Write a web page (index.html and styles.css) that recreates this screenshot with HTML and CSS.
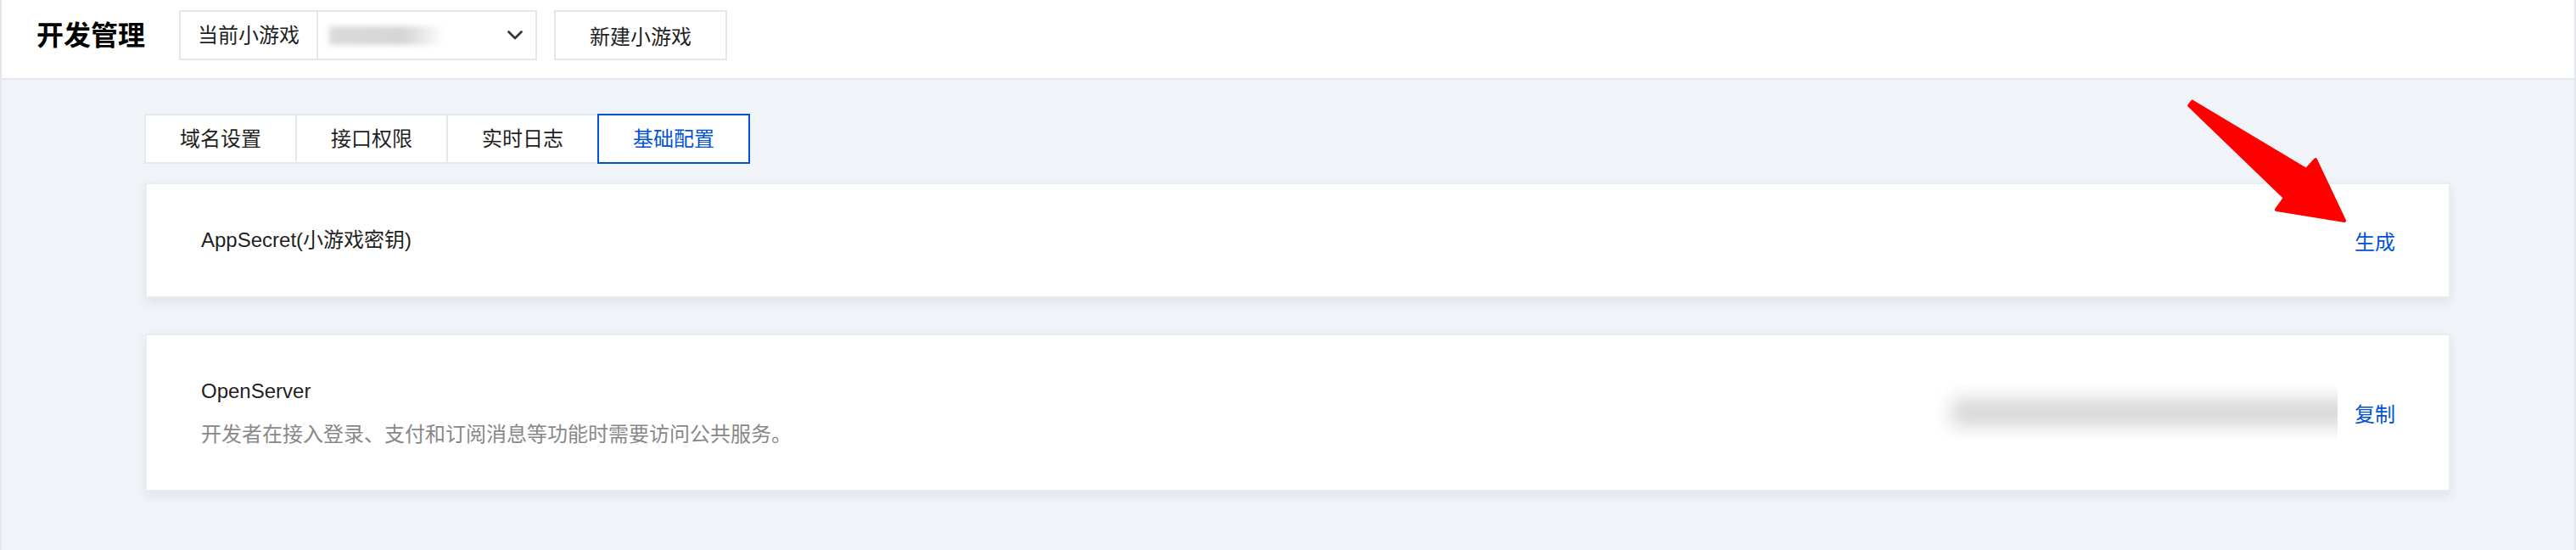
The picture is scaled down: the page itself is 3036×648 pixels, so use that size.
FILE: index.html
```html
<!doctype html>
<html lang="zh-CN">
<head>
    <meta charset="UTF-8">
    <meta name="viewport" content="width=device-width, initial-scale=1.0">
    <title>开发管理</title>
    <link rel="stylesheet" href="styles.css">
</head>
<body>
<div class="page">
    <header class="topbar">
        <h1 class="page-title">开发管理</h1>
        <div class="game-select">
            <span class="game-select-label">当前小游戏</span>
            <div class="game-select-value">
                <span class="blur-short"></span>
                <svg class="chevron" width="18" height="11" viewBox="0 0 18 11">
                    <polyline points="1.5,1.5 9,9 16.5,1.5" fill="none" stroke="#333" stroke-width="2.6" stroke-linecap="round" stroke-linejoin="round"/>
                </svg>
            </div>
        </div>
        <button class="btn-new">新建小游戏</button>
    </header>

    <main class="content">
        <nav class="tabs">
            <span class="tab">域名设置</span>
            <span class="tab">接口权限</span>
            <span class="tab">实时日志</span>
            <span class="tab tab-active">基础配置</span>
        </nav>

        <section class="card card-secret">
            <span class="card-name">AppSecret(小游戏密钥)</span>
            <a class="card-action">生成</a>
        </section>

        <section class="card card-server">
            <div class="card-info">
                <div class="card-name">OpenServer</div>
                <div class="card-desc">开发者在接入登录、支付和订阅消息等功能时需要访问公共服务。</div>
            </div>
            <div class="card-right">
                <span class="blur-mask"><span class="blur-long"></span></span>
                <a class="card-action">复制</a>
            </div>
        </section>
    </main>

    <!-- red annotation arrow pointing at 生成 -->
    <svg class="annot-arrow" width="210" height="160" viewBox="0 0 210 160">
        <polygon points="13.8,9.6 148,90 159,78 193,150 113,137 123,123 10.2,14.4" fill="#ff0000" stroke="#ff0000" stroke-width="4" stroke-linejoin="round"/>
    </svg>
</div>
</body>
</html>
```

FILE: styles.css
```css
html, body {
    margin: 0;
    background: #f0f3f8;
}
body {
    font-family: "Liberation Sans", "Noto Sans CJK SC", sans-serif;
    font-size: 24px;
    color: #1f1f1f;
}
.page {
    position: relative;
    min-height: 648px;
    border-left: 2px solid #e4e7ed;
    border-right: 2px solid #e4e7ed;
    box-sizing: border-box;
}
.topbar {
    display: flex;
    align-items: center;
    height: 94px;
    padding: 0 0 9px 41px;
    box-sizing: border-box;
    background: #fff;
    border-bottom: 2px solid #e4e7ed;
}
.page-title {
    margin: 0 40px 0 0;
    font-size: 32px;
    font-weight: 700;
    line-height: 1;
    color: #000;
}
.game-select {
    display: flex;
    height: 59px;
    border: 2px solid #e3e7ed;
    box-sizing: border-box;
}
.game-select-label {
    padding: 0 20px;
    line-height: 55px;
    border-right: 2px solid #e3e7ed;
}
.game-select-value {
    display: flex;
    align-items: center;
    justify-content: space-between;
    width: 256px;
    padding: 0 15px 0 13px;
    box-sizing: border-box;
}
.blur-short {
    display: block;
    width: 136px;
    height: 22px;
    background: linear-gradient(to right, #dadada, #d5d5d5 65%, rgba(220, 220, 220, 0));
    filter: blur(3px);
}
.chevron {
    display: block;
}
.btn-new {
    margin-left: 20px;
    height: 59px;
    padding: 0 40px;
    border: 2px solid #e3e7ed;
    background: #fff;
    font-family: inherit;
    font-size: 24px;
    color: #1f1f1f;
}
.content {
    padding: 40px 146px 0 168px;
}
.tabs {
    display: flex;
    margin-bottom: 22px;
}
.tab {
    width: 180px;
    height: 59px;
    line-height: 55px;
    text-align: center;
    background: #fff;
    border: 2px solid #e5e8ee;
    box-sizing: border-box;
}
.tab + .tab {
    margin-left: -2px;
}
.tab-active {
    position: relative;
    z-index: 1;
    color: #0052d9;
    border-color: #0052d9;
}
.card {
    display: flex;
    align-items: center;
    justify-content: space-between;
    margin-left: 1px;
    padding: 0 63px 0 64px;
    background: #fff;
    border: 2px solid #e9ecf1;
    box-shadow: 0 5px 12px rgba(0, 0, 0, 0.07);
    box-sizing: border-box;
}
.card-secret {
    height: 136px;
    margin-bottom: 42px;
}
.card-server {
    height: 186px;
}
.card-name {
    line-height: 36px;
}
.card-desc {
    margin-top: 15px;
    line-height: 36px;
    color: #888;
}
.card-action {
    color: #0052d9;
    cursor: pointer;
}
.card-right {
    display: flex;
    align-items: center;
    gap: 20px;
}
.blur-mask {
    display: block;
    width: 477px;
    height: 64px;
    overflow: hidden;
}
.blur-long {
    display: block;
    width: 500px;
    height: 32px;
    margin: 16px 0 0 22px;
    background: #d6d6d6;
    filter: blur(11px);
}
.annot-arrow {
    position: absolute;
    left: 2568px;
    top: 110px;
}
```
